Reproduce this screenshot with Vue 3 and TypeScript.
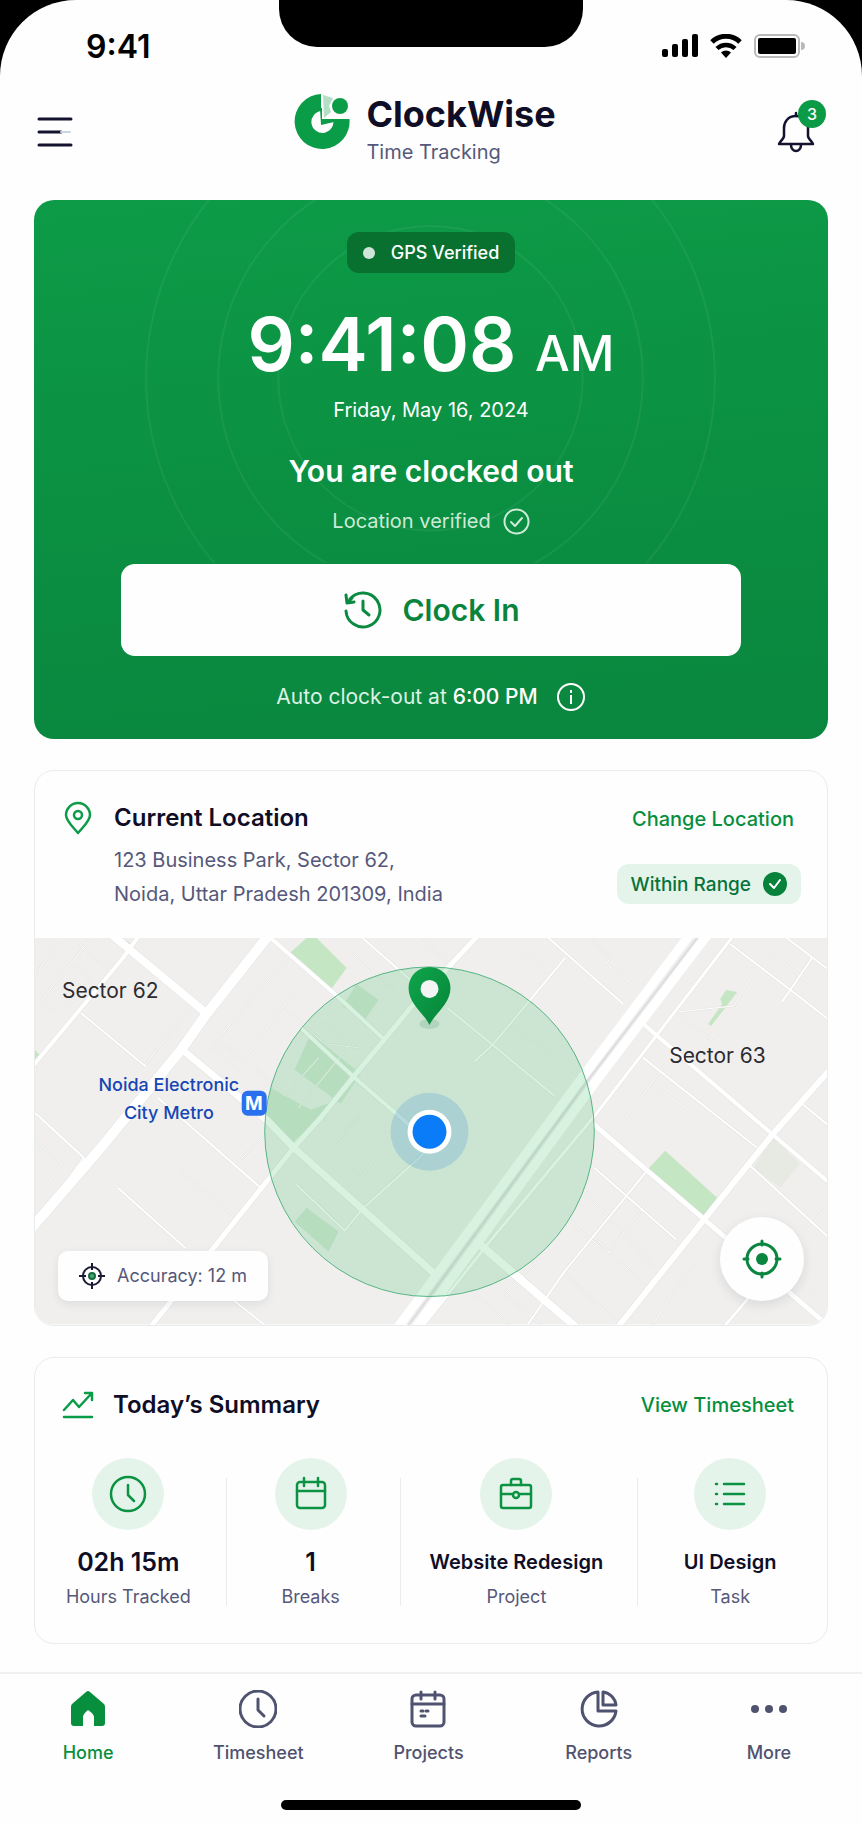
<script setup lang="ts">
interface Stat {
  value: string
  label: string
  icon: string[]
  large: boolean
}

interface Tab {
  label: string
  icon: string[]
  fill: boolean
  active: boolean
}

interface Road {
  d: string
  w: number
}

const clock = ['M19 2a17 17 0 1 0 0 34a17 17 0 1 0 0-34z', 'M19 10v10l6 6']

const stats: Stat[] = [
  { value: '02h 15m', label: 'Hours Tracked', icon: clock, large: true },
  {
    value: '1',
    label: 'Breaks',
    icon: ['M8 7h22a3 3 0 0 1 3 3v20a3 3 0 0 1-3 3H8a3 3 0 0 1-3-3V10a3 3 0 0 1 3-3z', 'M5 16h28', 'M12 3v8', 'M26 3v8'],
    large: true
  },
  {
    value: 'Website Redesign',
    label: 'Project',
    icon: ['M6 10h26a2 2 0 0 1 2 2v19a2 2 0 0 1-2 2H6a2 2 0 0 1-2-2V12a2 2 0 0 1 2-2z', 'M14 10V6a2 2 0 0 1 2-2h6a2 2 0 0 1 2 2v4', 'M4 19h12', 'M22 19h12', 'M19 17a3 3 0 1 0 0 6a3 3 0 1 0 0-6z'],
    large: false
  },
  {
    value: 'UI Design',
    label: 'Task',
    icon: ['M5 9h1', 'M5 19h1', 'M5 29h1', 'M13 9h20', 'M13 19h20', 'M13 29h20'],
    large: false
  }
]

const tabs: Tab[] = [
  {
    label: 'Home',
    icon: ['M17 2a3 3 0 0 1 4 0l14 12a4 4 0 0 1 1 3v16a3 3 0 0 1-3 3h-8V27q0-3-6-7q-5 4-5 7v9H5a3 3 0 0 1-3-3V17a4 4 0 0 1 1-3z'],
    fill: true,
    active: true
  },
  { label: 'Timesheet', icon: ['M19 1a18 18 0 1 0 0 36a18 18 0 1 0 0-36z', 'M19 9v11l6 6'], fill: false, active: false },
  {
    label: 'Projects',
    icon: ['M7 5h24a4 4 0 0 1 4 4v23a4 4 0 0 1-4 4H7a4 4 0 0 1-4-4V9a4 4 0 0 1 4-4z', 'M3 14h32', 'M12 2v7', 'M26 2v7', 'M12 21h2', 'M17 21h2', 'M12 26h4'],
    fill: false,
    active: false
  },
  {
    label: 'Reports',
    icon: ['M18 2a17 17 0 1 0 18 19H18z', 'M23 2a15 15 0 0 1 13 13H23z'],
    fill: false,
    active: false
  },
  {
    label: 'More',
    icon: ['M5 15a4 4 0 1 0 0 8a4 4 0 1 0 0-8z', 'M19 15a4 4 0 1 0 0 8a4 4 0 1 0 0-8z', 'M33 15a4 4 0 1 0 0 8a4 4 0 1 0 0-8z'],
    fill: true,
    active: false
  }
]

const roads: Road[] = [
  { d: 'M235 -4L171 77L147 111L66 210L-4 291', w: 10 },
  { d: 'M76 -4L171 75', w: 8 },
  { d: 'M104 -2L88 20L-2 128', w: 4 },
  { d: 'M46 75L111 129', w: 2 },
  { d: 'M156 71L109 128', w: 1 },
  { d: 'M149 113L233 183L259 210L402 338', w: 7 },
  { d: 'M236 0L299 55L350 102', w: 4 },
  { d: 'M443 -2L376 70L318 140L286 180L259 210L179 310L116 389', w: 5 },
  { d: 'M266 90L320 140L385 196', w: 4 },
  { d: 'M396 210L329 270L310 293L262 247', w: 2 },
  { d: 'M123 160L226 250', w: 2 },
  { d: 'M83 250L151 311', w: 2 },
  { d: 'M146 233L199 278', w: 1 },
  { d: 'M199 363L232 389', w: 2 },
  { d: 'M0 175L49 220L36 238', w: 2 },
  { d: 'M0 202L27 226L14 246', w: 1 },
  { d: 'M56 0L7 62L20 73', w: 1 },
  { d: 'M24 6L2 34', w: 1 },
  { d: 'M40 2L84 40', w: 1 },
  { d: 'M34 22L56 42L30 72', w: 1 },
  { d: 'M253 18L176 110L206 136', w: 1 },
  { d: 'M266 44L208 124L186 104', w: 1 },
  { d: 'M250 70L290 106L324 110', w: 1 },
  { d: 'M220 130L250 158L284 120', w: 1 },
  { d: 'M264 170L316 106L288 82', w: 1 },
  { d: 'M300 206L326 178L356 200L326 240z', w: 1 },
  { d: 'M230 196L206 222', w: 1 },
  { d: 'M328 0L376 42', w: 2 },
  { d: 'M388 0L424 34', w: 1 },
  { d: 'M318 14L360 52', w: 1 },
  { d: 'M512 -2L589 66', w: 2 },
  { d: 'M556 0L576 20L572 26L598 46', w: 1 },
  { d: 'M531 20L459 106L440 124', w: 2 },
  { d: 'M482 8L520 40', w: 1 },
  { d: 'M413 70L520 158', w: 2 },
  { d: 'M478 88L542 136', w: 1 },
  { d: 'M699 -2L562 176L456 303L388 389', w: 3 },
  { d: 'M609 86L795 245', w: 4 },
  { d: 'M795 133L739 196L669 283L584 389', w: 6 },
  { d: 'M559 186L613 233L689 298L795 389', w: 5 },
  { d: 'M441 303L541 389', w: 8 },
  { d: 'M609 120L723 210', w: 2 },
  { d: 'M618 146L660 176', w: 1 },
  { d: 'M696 6L754 50L795 82', w: 2 },
  { d: 'M750 -2L795 32', w: 2 },
  { d: 'M778 20L748 64', w: 2 },
  { d: 'M736 14L776 46', w: 1 },
  { d: 'M722 30L700 68L644 74', w: 1 },
  { d: 'M644 76L680 104', w: 1 },
  { d: 'M768 166L795 188', w: 2 },
  { d: 'M716 228L795 300', w: 2 },
  { d: 'M795 260L740 332', w: 1 },
  { d: 'M630 128L590 182', w: 1 },
  { d: 'M613 233L530 334L492 389', w: 2 },
  { d: 'M560 230L642 302', w: 2 },
  { d: 'M548 250L620 330', w: 1 },
  { d: 'M612 266L574 316L540 288', w: 1 },
  { d: 'M530 336L580 382', w: 1 },
  { d: 'M558 298L612 350', w: 1 },
  { d: 'M500 326L470 356L506 387', w: 1 },
  { d: 'M440 356L474 387', w: 1 },
  { d: 'M720 354L690 389', w: 3 },
  { d: 'M664 322L638 356L618 389', w: 1 },
  { d: 'M776 352L795 366', w: 1 }
]
</script>

<template>
  <div class="device">
    <div class="screen">
      <div class="notch" aria-hidden="true"></div>

      <div class="status">
        <span class="status-time">9:41</span>
        <div class="status-icons">
          <svg width="36" height="24" viewBox="0 0 36 24" aria-label="Signal" role="img">
            <rect x="0" y="15" width="6" height="8" rx="2" />
            <rect x="10" y="10" width="6" height="13" rx="2" />
            <rect x="20" y="5" width="6" height="18" rx="2" />
            <rect x="30" y="0" width="6" height="23" rx="2" />
          </svg>
          <svg width="32" height="24" viewBox="0 0 32 24" aria-label="Wi-Fi" role="img">
            <path d="M2 8a20 20 0 0 1 28 0" fill="none" stroke="#000" stroke-width="5" />
            <path d="M7 14.500a13 13 0 0 1 18 0" fill="none" stroke="#000" stroke-width="4.500" />
            <path d="M11 18.500a7 7 0 0 1 10 0L16 24z" />
          </svg>
          <svg width="51" height="24" viewBox="0 0 51 24" aria-label="Battery" role="img">
            <rect x="1" y="1" width="44" height="22" rx="5" fill="none" stroke="#b9b9b9" stroke-width="2" />
            <rect x="4" y="4" width="38" height="16" rx="2" />
            <path d="M47 8a4 4 0 0 1 0 8z" fill="#b9b9b9" />
          </svg>
        </div>
      </div>

      <header class="header">
        <button class="icon-btn" type="button" aria-label="Menu">
          <svg width="36" height="30" viewBox="0 0 36 30" fill="none" stroke="#14132f" stroke-width="3" stroke-linecap="round">
            <path d="M2 2h32M2 15h22M2 28h32" />
            <path d="M24 15h9" stroke="#c9d5e2" stroke-width="2" />
          </svg>
        </button>
        <div class="brand">
          <svg width="56" height="56" viewBox="0 0 56 56" aria-hidden="true">
            <path d="M27 0A27.500 27.500 0 1 0 55.500 25H39A11 11 0 1 1 27 17z" fill="#0b9c47" />
            <path d="M29 1l10 3-4 8 2 6-7 6z" fill="#b4dfc5" />
            <path d="M26 14h2v11h12v3l-13 3z" fill="#0b9c47" />
            <circle cx="46" cy="12" r="8" fill="#0b9c47" />
          </svg>
          <div>
            <h1>ClockWise</h1>
            <p>Time Tracking</p>
          </div>
        </div>
        <button class="icon-btn bell" type="button" aria-label="Notifications, 3 unread">
          <svg width="38" height="42" viewBox="0 0 38 42" fill="none" stroke="#14132f" stroke-width="2.500" stroke-linejoin="round" stroke-linecap="round">
            <path d="M19 2v3" />
            <path d="M19 5C11 5 7 11 7 17v8c0 3-5 6-5 8h34c0-2-5-5-5-8v-8C31 11 27 5 19 5z" />
            <path d="M14 34a5 6 0 0 0 10 0" />
          </svg>
          <span class="badge">3</span>
        </button>
      </header>

      <main class="content">
        <section class="hero">
          <svg class="rings" viewBox="0 0 793 363" preserveAspectRatio="xMidYMin slice" aria-hidden="true">
            <g fill="none" stroke="#fff" stroke-opacity="0.060" stroke-width="2">
              <circle cx="396" cy="178" r="284" />
              <circle cx="396" cy="178" r="212" />
              <circle cx="396" cy="178" r="152" />
            </g>
          </svg>
          <div class="gps"><i></i>GPS Verified</div>
          <div class="now">9:41:08 <span>AM</span></div>
          <p class="date">Friday, May 16, 2024</p>
          <h2>You are clocked out</h2>
          <p class="verified">
            Location verified
            <svg width="27" height="27" viewBox="0 0 27 27" fill="none" stroke="currentColor" stroke-width="2" stroke-linecap="round" stroke-linejoin="round" aria-hidden="true">
              <circle cx="13.500" cy="13.500" r="12" />
              <path d="M8 14l4 4 7-8" />
            </svg>
          </p>
          <button class="clock-in" type="button">
            <svg width="40" height="40" viewBox="0 0 40 40" fill="none" stroke="#0a8a40" stroke-width="3" stroke-linecap="round" stroke-linejoin="round" aria-hidden="true">
              <path d="M3 21A17 17 0 1 0 7 9" />
              <path d="M3 5l1 8 7-1M4 13l5-5" />
              <path d="M20 11v9l6 5" />
            </svg>
            Clock In
          </button>
          <p class="auto">
            <span>Auto clock-out at <b>6:00 PM</b></span>
            <svg width="30" height="30" viewBox="0 0 30 30" fill="none" stroke="#fff" stroke-width="2" aria-hidden="true">
              <circle cx="15" cy="15" r="13" />
              <path d="M15 13v9M15 8v3" />
            </svg>
          </p>
        </section>

        <section class="card">
          <div class="location">
            <svg class="lead" width="28" height="34" viewBox="0 0 28 34" fill="none" stroke="#0b9c47" stroke-width="2.500" stroke-linejoin="round" aria-hidden="true">
              <path d="M14 32C9 26 2 20 2 14a12 12 0 0 1 24 0c0 6-7 12-12 18z" />
              <circle cx="14" cy="14" r="4" />
            </svg>
            <div class="place">
              <h3>Current Location</h3>
              <address>123 Business Park, Sector 62,<br />Noida, Uttar Pradesh 201309, India</address>
            </div>
            <div class="range">
              <a href="#location">Change Location</a>
              <span class="pill">
                Within Range
                <svg width="24" height="24" viewBox="0 0 24 24" aria-hidden="true">
                  <circle cx="12" cy="12" r="12" fill="#07823b" />
                  <path d="M7 12l4 4 6-8" fill="none" stroke="#fff" stroke-width="2" stroke-linecap="round" stroke-linejoin="round" />
                </svg>
              </span>
            </div>
          </div>

          <div class="map">
            <svg class="map-art" viewBox="0 0 793 387" preserveAspectRatio="xMidYMid slice" role="img" aria-label="Map of the area around Sector 62 and Sector 63">
              <defs>
                <linearGradient id="pin" x1="0" y1="0" x2="1" y2="1">
                  <stop offset="0" stop-color="#10a44c" />
                  <stop offset="1" stop-color="#058538" />
                </linearGradient>
              </defs>
              <rect width="793" height="387" fill="#f0efee" />
              <g fill="#c5e6c3">
                <path d="M272 0h10l30 30-16 22-42-36z" />
                <path d="M631 213l52 47-15 20-54-49z" />
                <path d="M692 52l11 2-12 16-14 18-3-2 14-20-2-5z" />
                <circle cx="91" cy="8" r="5" />
                <path d="M0 112l6 7-6 7z" />
              </g>
              <path d="M739 200l27 26-20 24-27-20z" fill="#e7e9e3" />
              <g fill="#b4dcb5" fill-opacity="0.450">
                <path d="M236 150l40 22 28-10-45 42-28-24z" />
                <path d="M276 96l50 40-20 30-46-34z" />
                <path d="M272 270l32 24-10 20-34-30z" />
                <path d="M322 46l22 16-14 20-22-14z" />
              </g>
              <g fill="none" stroke="#e2e2e0" stroke-linejoin="round">
                <path v-for="r in roads" :key="r.d" :d="r.d" :stroke-width="r.w + 1" />
              </g>
              <g fill="none" stroke="#fff" stroke-linejoin="round">
                <path v-for="r in roads" :key="r.d" :d="r.d" :stroke-width="r.w" />
                <path d="M656 -4L552 134L364 389M674 -4L562 143L382 389" stroke-width="9" />
                <path d="M666 -4L557 138L373 389" stroke="#dcdce2" stroke-width="2" />
              </g>

              <circle cx="395" cy="194" r="165" fill="#3cbf62" fill-opacity="0.200" stroke="#55b585" stroke-width="1" />
              <circle cx="395" cy="194" r="39" fill="#2d83d6" fill-opacity="0.200" />
              <circle cx="395" cy="194" r="22" fill="#fff" />
              <circle cx="395" cy="194" r="17" fill="#0a7cf8" />
              <ellipse cx="395" cy="86" rx="10" ry="5" fill="#1b7c45" fill-opacity="0.150" />
              <path d="M395 87C390 76 374 66 374 50a21 21 0 0 1 42 0c0 16-16 26-21 37z" fill="url(#pin)" />
              <circle cx="395" cy="51" r="9" fill="#f4f4f4" />

              <g class="district">
                <text x="27" y="60">Sector 62</text>
                <text x="635" y="125">Sector 63</text>
              </g>
              <g class="metro" text-anchor="middle">
                <text x="134" y="153">Noida Electronic</text>
                <text x="134" y="181">City Metro</text>
              </g>
              <rect x="207" y="153" width="25" height="25" rx="6" fill="#2b70ee" />
              <text class="metro-m" x="219" y="172" text-anchor="middle">M</text>
            </svg>

            <div class="accuracy">
              <svg width="26" height="26" viewBox="0 0 26 26" fill="none" stroke="#1c1b36" stroke-width="2" aria-hidden="true">
                <circle cx="13" cy="13" r="9" />
                <path d="M13 0v7M13 19v7M0 13h7M19 13h7" />
                <circle cx="13" cy="13" r="3" fill="#4ba779" stroke="#176b40" />
              </svg>
              Accuracy: 12 m
            </div>
            <button class="locate" type="button" aria-label="Centre map on my position">
              <svg width="40" height="40" viewBox="0 0 40 40" fill="none" stroke="#0a8540" stroke-width="3" stroke-linecap="round" aria-hidden="true">
                <circle cx="20" cy="20" r="15" />
                <path d="M20 2v4M20 34v4M2 20h4M34 20h4" />
                <circle cx="20" cy="20" r="6" fill="#0a8540" stroke="none" />
              </svg>
            </button>
          </div>
        </section>

        <section class="card">
          <div class="summary-head">
            <svg width="32" height="28" viewBox="0 0 32 28" fill="none" stroke="#0b9c47" stroke-width="2.500" stroke-linecap="round" stroke-linejoin="round" aria-hidden="true">
              <path d="M2 19l9-10 6 7L29 3M23 2h7v7M2 26h28" />
            </svg>
            <h3>Today’s Summary</h3>
            <a href="#timesheet">View Timesheet</a>
          </div>
          <ul class="stats">
            <li v-for="s in stats" :key="s.label">
              <span class="disc">
                <svg width="38" height="38" viewBox="0 0 38 38" fill="none" stroke="#0b9343" stroke-width="2.500" stroke-linecap="round" stroke-linejoin="round" aria-hidden="true">
                  <path v-for="p in s.icon" :key="p" :d="p" />
                </svg>
              </span>
              <strong :class="{ large: s.large }">{{ s.value }}</strong>
              <small>{{ s.label }}</small>
            </li>
          </ul>
        </section>
      </main>

      <nav class="tabs">
        <a v-for="t in tabs" :key="t.label" href="#" :class="{ active: t.active }" :aria-current="t.active ? 'page' : undefined">
          <svg width="38" height="38" viewBox="0 0 38 38" :class="t.fill ? 'solid' : 'line'" aria-hidden="true">
            <path v-for="p in t.icon" :key="p" :d="p" />
          </svg>
          {{ t.label }}
        </a>
      </nav>
      <div class="home-bar" aria-hidden="true"></div>
    </div>
  </div>
</template>

<style>
body {
  margin: 0;
  background: #000;
}
</style>

<style scoped>
.device {
  font-family: Inter, 'Liberation Sans', sans-serif;
  color: #0f0e26;
  background: #000;
}

.screen {
  position: relative;
  display: flex;
  flex-direction: column;
  box-sizing: border-box;
  min-height: 100vh;
  padding-bottom: 16px;
  background: #fefefe;
  border-radius: 76px 76px 0 0;
}

h1,
h2,
h3,
p,
ul {
  margin: 0;
  padding: 0;
}

button {
  font: inherit;
  border: 0;
  padding: 0;
  cursor: pointer;
}

svg {
  display: block;
  flex: none;
}

a {
  color: #078f3e;
  text-decoration: none;
}

.notch {
  position: absolute;
  top: 0;
  left: 50%;
  width: 304px;
  height: 47px;
  transform: translateX(-50%);
  background: #000;
  border-radius: 0 0 38px 38px;
}

.status {
  display: flex;
  justify-content: space-between;
  align-items: center;
  height: 92px;
  padding: 0 57px 0 86px;
}

.status-time {
  font-size: 32px;
  font-weight: 600;
  color: #000;
}

.status-icons {
  display: flex;
  gap: 12px;
}

.header {
  display: flex;
  justify-content: space-between;
  align-items: center;
  height: 80px;
  padding: 0 47px 0 37px;
}

.icon-btn {
  position: relative;
  background: none;
}

.brand {
  display: flex;
  align-items: flex-start;
  gap: 16px;
}

h1 {
  font-size: 36px;
  line-height: 40px;
  font-weight: 700;
}

.brand p {
  font-size: 20px;
  line-height: 36px;
  color: #56587a;
}

.badge {
  position: absolute;
  top: -11px;
  right: -11px;
  width: 28px;
  height: 28px;
  border-radius: 50%;
  background: #0b9a45;
  color: #fff;
  font-size: 16px;
  line-height: 28px;
  font-weight: 500;
  text-align: center;
}

.content {
  display: flex;
  flex-direction: column;
  gap: 31px;
  padding: 28px 34px;
}

.hero {
  position: relative;
  display: flex;
  flex-direction: column;
  align-items: center;
  padding: 32px 32px 27px;
  border-radius: 20px;
  background: linear-gradient(175deg, #0d9b47 0%, #0b9142 45%, #0a863f 100%);
  color: #fff;
}

.hero > * {
  position: relative;
}

.hero > .rings {
  position: absolute;
  inset: 0 0 auto;
  width: 100%;
  height: 363px;
}

.gps {
  display: flex;
  align-items: center;
  gap: 16px;
  height: 41px;
  padding: 0 16px;
  border-radius: 12px;
  background: #08712f;
  font-size: 18px;
  font-weight: 500;
}

.gps i {
  width: 12px;
  height: 12px;
  border-radius: 50%;
  background: #cfe5d7;
}

.now {
  margin-top: 30px;
  font-size: 74px;
  line-height: 82px;
  font-weight: 600;
}

.now span {
  font-size: 49px;
  font-weight: 500;
}

.date {
  margin-top: 0;
  font-size: 20px;
  line-height: 30px;
}

h2 {
  margin-top: 26px;
  font-size: 30px;
  line-height: 40px;
  font-weight: 600;
}

.verified {
  display: flex;
  align-items: center;
  gap: 12px;
  margin-top: 15px;
  font-size: 20px;
  line-height: 30px;
  color: #cdebd8;
}

.clock-in {
  display: flex;
  justify-content: center;
  align-items: center;
  gap: 20px;
  box-sizing: border-box;
  width: 85%;
  height: 92px;
  margin-top: 28px;
  border-radius: 14px;
  background: #fefefe;
  color: #0a843d;
  font-size: 30px;
  font-weight: 600;
}

.auto {
  display: flex;
  align-items: center;
  gap: 18px;
  margin-top: 26px;
  font-size: 21px;
  line-height: 30px;
  color: #dcf2e4;
}

.auto b {
  font-weight: 500;
  color: #fff;
}

.card {
  overflow: hidden;
  border: 1px solid #e9ebec;
  border-radius: 20px;
  background: #fefefe;
}

.location {
  display: flex;
  align-items: flex-start;
  padding: 30px 26px 27px 29px;
}

.lead {
  margin-right: 22px;
}

.place {
  flex: 1;
}

h3 {
  font-size: 24px;
  line-height: 34px;
  font-weight: 600;
}

address {
  margin-top: 8px;
  font-size: 20px;
  line-height: 34px;
  font-style: normal;
  color: #56587a;
}

.range {
  display: flex;
  flex-direction: column;
  align-items: flex-end;
  gap: 30px;
}

.range a {
  padding: 3px 7px 0 0;
}

.range a,
.summary-head a {
  font-size: 20px;
  line-height: 30px;
  font-weight: 500;
}

.pill {
  display: flex;
  align-items: center;
  gap: 12px;
  height: 40px;
  padding: 0 14px;
  border-radius: 12px;
  background: #e5f4ea;
  color: #07723a;
  font-size: 19px;
  font-weight: 500;
}

.map {
  position: relative;
}

.map-art {
  width: 100%;
  aspect-ratio: 793 / 387;
}

.district {
  font-size: 21px;
  fill: #2b2b30;
}

.metro {
  font-size: 18px;
  font-weight: 500;
  fill: #1646b4;
}

.metro-m {
  font-size: 19px;
  font-weight: 700;
  fill: #fff;
}

.accuracy {
  position: absolute;
  left: 23px;
  bottom: 24px;
  display: flex;
  align-items: center;
  gap: 12px;
  height: 50px;
  padding: 0 21px;
  border-radius: 10px;
  background: #fefefe;
  box-shadow: 0 3px 10px rgba(30, 30, 50, 0.08);
  color: #56587a;
  font-size: 18px;
}

.locate {
  position: absolute;
  right: 23px;
  bottom: 24px;
  display: grid;
  place-items: center;
  width: 84px;
  height: 84px;
  border-radius: 50%;
  background: #fefefe;
  box-shadow: 0 4px 12px rgba(30, 30, 50, 0.1);
}

.summary-head {
  display: flex;
  align-items: center;
  padding: 30px 33px 0 27px;
}

.summary-head h3 {
  flex: 1;
  margin-left: 19px;
}

.stats {
  display: grid;
  grid-template-columns: 191fr 174fr 238fr 190fr;
  padding: 36px 0 31px;
  list-style: none;
}

.stats li {
  position: relative;
  display: flex;
  flex-direction: column;
  align-items: center;
  padding-right: 4px;
}

.stats li + li::before {
  content: '';
  position: absolute;
  top: 20px;
  bottom: 6px;
  left: 0;
  width: 1px;
  background: #ebecef;
}

.disc {
  display: grid;
  place-items: center;
  width: 72px;
  height: 72px;
  border-radius: 50%;
  background: #e5f4ea;
}

.stats strong {
  margin-top: 16px;
  font-size: 20px;
  line-height: 32px;
  font-weight: 600;
}

.stats strong.large {
  font-size: 25px;
}

.stats small {
  margin-top: 4px;
  font-size: 18px;
  line-height: 30px;
  color: #56587a;
}

.tabs {
  display: grid;
  grid-template-columns: repeat(5, 1fr);
  margin-top: auto;
  padding: 16px 8px 0 3px;
  border-top: 2px solid #eef0f1;
}

.tabs a {
  display: flex;
  flex-direction: column;
  align-items: center;
  gap: 10px;
  color: #50536f;
  font-size: 18px;
  line-height: 30px;
  font-weight: 500;
}

.tabs a.active {
  color: #078f3e;
}

.solid {
  fill: currentColor;
}

.line {
  fill: none;
  stroke: currentColor;
  stroke-width: 3;
  stroke-linecap: round;
  stroke-linejoin: round;
}

.home-bar {
  width: 300px;
  height: 10px;
  margin: 32px auto 0;
  border-radius: 5px;
  background: #000;
}
</style>
